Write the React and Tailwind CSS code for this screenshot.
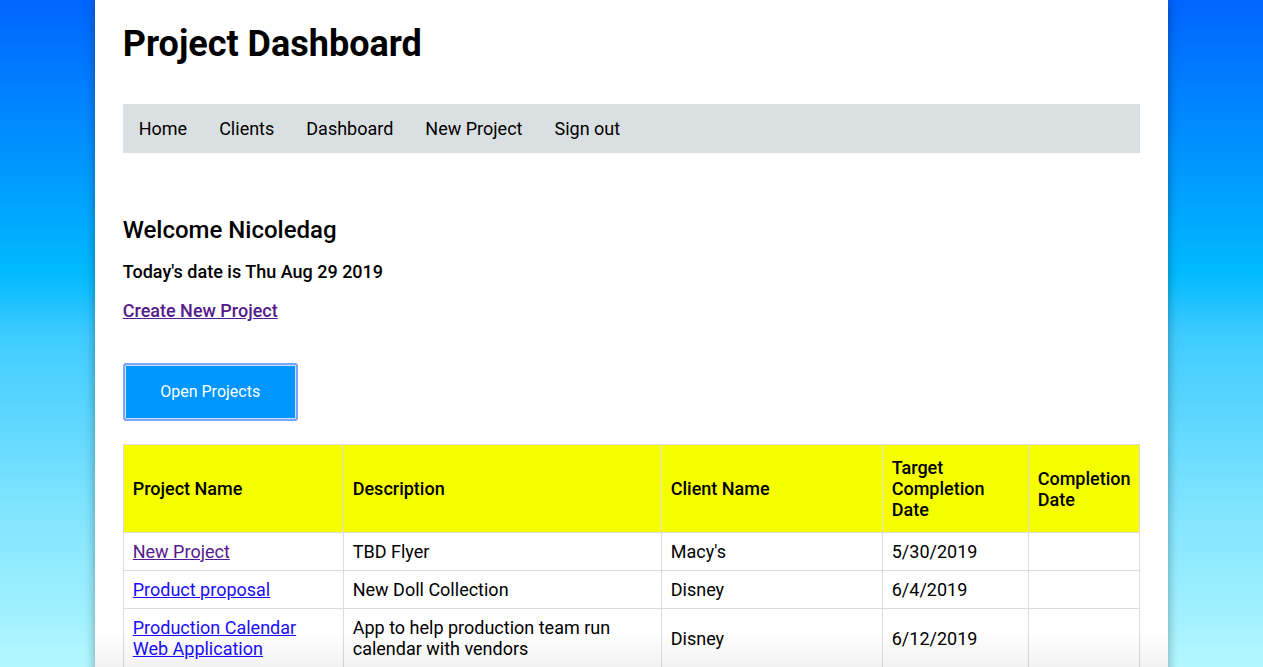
import React from 'react';

const navItems = ['Home', 'Clients', 'Dashboard', 'New Project', 'Sign out'];

const projects = [
  { name: 'New Project', visited: true, description: 'TBD Flyer', client: "Macy's", target: '5/30/2019', done: '' },
  { name: 'Product proposal', description: 'New Doll Collection', client: 'Disney', target: '6/4/2019', done: '' },
  {
    name: 'Production Calendar Web Application',
    description: 'App to help production team run calendar with vendors',
    client: 'Disney',
    target: '6/12/2019',
    done: '',
  },
];

const App = () => {
  return (
    <div
      className="min-h-screen bg-fixed bg-[linear-gradient(to_bottom,#0064ff_0%,#0096ff_24%,#00bbff_41%,#3ecbff_50%,#7fe4ff_76%,#b3f7ff_100%)] font-['Roboto',sans-serif] text-black"
    >
      <div className="mx-auto w-[85%] min-h-screen bg-white px-7 pb-10 shadow-[0_0_10px_rgba(0,0,0,0.35)]">
        {/* Header */}
        <h1 className="pt-[22px] text-[36px] leading-[44px] font-bold">Project Dashboard</h1>

        {/* Nav */}
        <nav className="mt-[38px] flex bg-[#dadfe1]">
          {navItems.map(item => (
            <a key={item} className="px-4 py-[14px] text-[18px] leading-[21px] text-black cursor-pointer">
              {item}
            </a>
          ))}
        </nav>

        {/* Welcome */}
        <h3 className="mt-[63px] text-[24px] leading-[28px] font-medium">Welcome Nicoledag</h3>
        <h4 className="mt-[18px] text-[18px] leading-[20px] font-medium">Today's date is Thu Aug 29 2019</h4>
        <div className="mt-[19px] text-[18px] leading-[20px]">
          <a className="font-medium text-[#551a8b] underline cursor-pointer">
            Create New Project
          </a>
        </div>

        <button className="mt-[42px] flex h-[58px] w-[175px] items-center justify-center rounded-[3px] border-2 border-[#7aa4ff] bg-[#0096ff] text-[16px] leading-[20px] text-white shadow-[inset_0_0_0_1px_#cfe2ff]">
          Open Projects
        </button>

        {/* Projects table */}
        <table className="mt-[23px] w-full table-fixed border-collapse text-[18px] leading-[21px]">
          <colgroup>
            <col className="w-[220px]" />
            <col className="w-[318px]" />
            <col className="w-[221px]" />
            <col className="w-[146px]" />
            <col />
          </colgroup>
          <thead>
            <tr className="h-[88px] bg-[#f6ff00]">
              {['Project Name', 'Description', 'Client Name', 'Target Completion Date', 'Completion Date'].map(h => (
                <th key={h} className="border border-[#dcdcdc] px-[9px] py-3 text-left align-middle font-medium">
                  {h}
                </th>
              ))}
            </tr>
          </thead>
          <tbody>
            {projects.map(p => (
              <tr key={p.name}>
                <td className="border border-[#dcdcdc] px-[9px] py-2 align-middle">
                  <a className={`underline cursor-pointer ${p.visited ? 'text-[#551a8b]' : 'text-[#1a0dff]'}`}>{p.name}</a>
                </td>
                <td className="border border-[#dcdcdc] px-[9px] py-2 align-middle">{p.description}</td>
                <td className="border border-[#dcdcdc] px-[9px] py-2 align-middle">{p.client}</td>
                <td className="border border-[#dcdcdc] px-[9px] py-2 align-middle">{p.target}</td>
                <td className="border border-[#dcdcdc] px-[9px] py-2 align-middle">{p.done}</td>
              </tr>
            ))}
          </tbody>
        </table>
      </div>

      {/* soft fade at the bottom edge of the page card */}
      <div className="pointer-events-none fixed bottom-0 left-0 right-0 mx-auto h-[34px] w-[85%] bg-[linear-gradient(to_bottom,rgba(0,0,0,0),rgba(0,0,0,0.05))]" />
    </div>
  );
};

export default App;
